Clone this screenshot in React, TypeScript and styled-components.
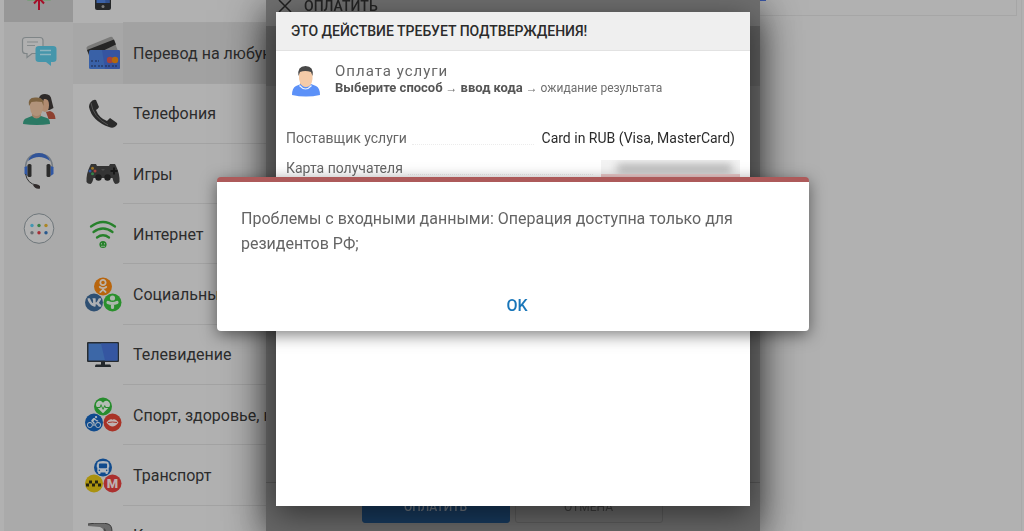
import React from 'react';
import styled, { createGlobalStyle } from 'styled-components';
import { FaVk, FaOdnoklassniki, FaBus, FaHeartbeat } from 'react-icons/fa';
import { MdDirectionsBike } from 'react-icons/md';

const GlobalStyle = createGlobalStyle`
  *, *::before, *::after { box-sizing: border-box; }
  body {
    margin: 0;
    overflow: hidden;
    background: #b1b1b1;
    color: #2c2c2c;
    font-family: Roboto, "Liberation Sans", sans-serif;
    font-size: 14px;
  }
  button { font-family: inherit; cursor: pointer; }
  svg { display: block; flex: none; }
`;

const Page = styled.div`
  display: flex;
  height: 100vh;
  overflow: hidden;
  padding: 0 2px 0 4px;
`;

const Sidebar = styled.nav`
  flex: none;
  width: 69px;
  background: #aaaaaa;
`;

const SideList = styled.ul`
  display: grid;
  grid-template-rows: repeat(5, 1fr);
  height: 298px;
  list-style: none;
  margin: -38px 0 0;
  padding: 0;
`;

const SideLink = styled.a<{ $active?: boolean }>`
  display: flex;
  align-items: center;
  justify-content: center;
  height: 100%;
  background: ${p => (p.$active ? '#979797' : 'transparent')};
`;

const Catalog = styled.nav`
  flex: none;
  width: 260px;
`;

const CatalogList = styled.ul`
  display: grid;
  grid-template-rows: repeat(10, 1fr);
  height: 603px;
  list-style: none;
  margin: -37px 0 0;
  padding: 0;
`;

const CatalogLink = styled.a<{ $active?: boolean }>`
  display: flex;
  align-items: stretch;
  height: 100%;
  color: #2c2c2c;
  text-decoration: none;
  background: ${p => (p.$active ? '#a7a7a7' : 'transparent')};
`;

const CatalogIcon = styled.span`
  display: flex;
  align-items: center;
  justify-content: center;
  flex: none;
  width: 50px;
  padding-left: 10px;
`;

const CatalogLabel = styled.span<{ $active?: boolean }>`
  display: flex;
  align-items: center;
  flex: 1;
  overflow: hidden;
  padding: 1px 0 0 10px;
  border-bottom: 1px solid #a3a3a3;
  background: ${p => (p.$active ? '#a2a2a2' : 'transparent')};
  font-size: 16px;
  white-space: nowrap;
`;

const Content = styled.main`
  flex: 1;
  padding-right: 4px;
  border-right: 1px solid #a9a9a9;
`;

const ContentCard = styled.section`
  display: flex;
  justify-content: center;
  height: 16px;
  border: solid #a6a6a6;
  border-width: 0 1px 1px 0;
`;

const CardMark = styled.span`
  width: 8px;
  height: 1px;
  margin-left: 174px;
  background: #3c59ac;
`;

const Layer = styled.div`
  position: fixed;
  inset: 0;
  display: flex;
  justify-content: center;
  padding-left: 2px;
`;

const PaymentWindow = styled.section`
  display: flex;
  flex-direction: column;
  width: 494px;
  background: #646464;
  box-shadow: 0 10px 40px rgba(0, 0, 0, 0.65);
`;

const PaymentHeader = styled.header`
  display: flex;
  align-items: center;
  gap: 12px;
  height: 26px;
  padding: 0 12px 14px;
  background: #6e6e6e;
`;

const CloseButton = styled.button`
  flex: none;
  padding: 0;
  border: 0;
  background: none;
`;

const PaymentTitle = styled.h1`
  margin: 0;
  color: #242424;
  font-size: 14px;
  font-weight: 500;
`;

const PaymentBanner = styled.div`
  height: 60px;
  background: #5b5b5b;
`;

const PaymentFooter = styled.footer`
  display: flex;
  justify-content: center;
  gap: 5px;
  margin-top: auto;
  padding: 6px 2px 8px 0;
  border-top: 1px solid #555555;
  background: #666666;
`;

const FooterButton = styled.button<{ $primary?: boolean }>`
  width: 148px;
  height: 34px;
  padding: 2px 0 0;
  border: 1px solid ${p => (p.$primary ? '#17395c' : '#5a5a5a')};
  border-radius: 3px;
  background: ${p => (p.$primary ? '#17395c' : 'transparent')};
  color: ${p => (p.$primary ? '#6d7680' : '#3c3c3c')};
  font-size: 12px;
  font-weight: ${p => (p.$primary ? 500 : 400)};
`;

const ConfirmLayer = styled(Layer)`
  padding-top: 12px;
  padding-bottom: 25px;
`;

const ConfirmDialog = styled.section`
  width: 474px;
  background: #ffffff;
  box-shadow: 0 8px 30px rgba(0, 0, 0, 0.5);
`;

const ConfirmTitle = styled.h2`
  margin: 0;
  padding: 0 15px;
  border-bottom: 1px solid #e2e2e2;
  background: #efefef;
  color: #2b2b2b;
  font-size: 14px;
  font-weight: 500;
  line-height: 38px;
`;

const StepHeader = styled.div`
  display: flex;
  align-items: center;
  gap: 14px;
  padding: 10px 15px;
`;

const StepIcon = styled.span`
  padding-top: 4px;
`;

const StepTitle = styled.h3`
  margin: 0;
  color: #666666;
  font-size: 15px;
  font-weight: 400;
  letter-spacing: 1px;
  line-height: 18px;
`;

const StepTrail = styled.p`
  margin: 0;
  color: #6e6e6e;
  font-size: 12px;
  line-height: 16px;
  b { color: #555555; font-size: 13px; font-weight: 700; }
`;

const Details = styled.dl`
  margin: 0;
  padding: 16px 10px 0;
`;

const DetailRow = styled.div`
  display: flex;
  align-items: center;
  height: 30px;
`;

const DetailTerm = styled.dt`
  flex: none;
  color: #666666;
`;

const Leader = styled.span`
  flex: 1;
  height: 14px;
  margin: 0 8px 0 5px;
  border-bottom: 1px dotted #ececec;
`;

const DetailValue = styled.dd`
  margin: 0;
  padding-right: 5px;
  color: #2b2b2b;
`;

const MaskedValue = styled.dd`
  flex: none;
  width: 139px;
  height: 17px;
  margin: 0;
  overflow: hidden;
  padding: 4px 8px 0 16px;
  border-bottom: 3px solid #eccaca;
  background: #f3f3f3;
`;

const MaskedDigits = styled.span`
  display: block;
  height: 9px;
  background: #b4b4b4;
  filter: blur(4px);
`;

const AlertLayer = styled(Layer)`
  align-items: center;
  padding-bottom: 23px;
`;

const AlertDialog = styled.section`
  display: flex;
  flex-direction: column;
  width: 592px;
  max-width: 90%;
  padding: 24px 24px 8px;
  border-top: 5px solid #ad5a5a;
  border-radius: 4px;
  background: #ffffff;
  box-shadow: 0 4px 16px rgba(0, 0, 0, 0.5);
`;

const AlertText = styled.p`
  margin: 0 0 32px;
  color: #646464;
  font-size: 16px;
  line-height: 25px;
`;

const OkButton = styled.button`
  align-self: center;
  height: 35px;
  padding: 0 12px 0 20px;
  border: 0;
  background: none;
  color: #1976b9;
  font-size: 16px;
  font-weight: 500;
`;

const TransferIcon = () => (
  <svg width="34" height="36" viewBox="0 0 34 36">
    <rect x="5" y="4" width="24" height="23" rx="1" fill="#7c9c7c" />
    <path d="M17 36V24M12 29.500l5-5.500 5 5.500" fill="none" stroke="#a50f28" strokeWidth="2" />
  </svg>
);

const ChatIcon = () => (
  <svg width="36" height="30" viewBox="0 0 36 30">
    <path d="M5 1.500h14q3 0 3 3v10q0 3-3 3h-8l-5 4v-4H4.500q-3 0-3-3v-10q0-3 3.500-3z" fill="#b0b0b0" stroke="#7f8587" strokeWidth="1.200" />
    <path d="M6 6h11M6 9.500h8" stroke="#858a8b" strokeWidth="1" />
    <path d="M18 10h14q3.500 0 3.500 3v10q0 3-3.500 3h-2v4l-5-4h-7q-3.500 0-3.500-3V13q0-3 3.500-3z" fill="#4596ab" />
    <path d="M19 14.500h11M19 18.500h11" stroke="#8cb5c0" strokeWidth="1.300" />
  </svg>
);

const PeopleIcon = () => (
  <svg width="34" height="34" viewBox="0 0 34 34">
    <path d="M17 4q1-4 6-4 6 0 6.500 6l2 8-4 2h-8z" fill="#2e2a29" />
    <path d="M22 5q5-1 5 6t-4 7l-5-2z" fill="#b08b70" />
    <path d="M24 18l4-1q5 1 5.500 8h-7z" fill="#8d4030" />
    <path d="M10 18h9v6l-4 4-5-4z" fill="#a1836a" />
    <path d="M8 8q0-4 6-4t7 4v6q-1 8-6.500 8T8 14z" fill="#b1937a" />
    <path d="M7 12Q5 3 14 3.500 23 3 21.500 12L20 8Q14 7 9.500 8z" fill="#7c6240" />
    <path d="M1 30q0-5 4-6l5-2q4.500 5 9 0l6 2q3 1 3 6-13 2-27 0z" fill="#2b7964" />
  </svg>
);

const HeadsetIcon = () => (
  <svg width="32" height="38" viewBox="0 0 32 38">
    <path d="M2.500 16Q3 2 16 2t13.500 14" fill="none" stroke="#747b83" strokeWidth="1.500" />
    <path d="M5 9q3-8 11-8t11 8q-11-8-22 0z" fill="#315499" />
    <path d="M1.500 15l3-1v10l-3-2zM30.500 15l-3-1v10l3-2z" fill="#3158a5" />
    <rect x="4.500" y="12" width="4" height="13" rx="1.500" fill="#2b2b2b" />
    <rect x="23.500" y="12" width="4" height="13" rx="1.500" fill="#2b2b2b" />
    <path d="M2.500 22q2 10 11 11" fill="none" stroke="#343434" strokeWidth="1" />
    <path d="M10 33q4-2 7 1v2.500q-5 1-7-3.500z" fill="#322c2c" />
  </svg>
);

const AppsIcon = () => (
  <svg width="32" height="34" viewBox="0 0 32 34">
    <circle cx="16" cy="15.500" r="14.800" fill="#b1b1b1" stroke="#6f777b" />
    <circle cx="9" cy="12.500" r="1.700" fill="#4397b2" />
    <circle cx="16" cy="12.500" r="1.700" fill="#3b8245" />
    <circle cx="23" cy="12.500" r="1.700" fill="#ac8625" />
    <circle cx="9" cy="19.700" r="1.700" fill="#666d72" />
    <circle cx="16" cy="19.700" r="1.700" fill="#a72e36" />
    <circle cx="23" cy="19.700" r="1.700" fill="#29598d" />
  </svg>
);

const MobileIcon = () => (
  <svg width="18" height="36" viewBox="0 0 18 36">
    <rect x="1" y="0" width="16" height="35" rx="2" fill="#252729" />
    <rect x="2.500" y="3" width="13" height="25" fill="#3b61a6" />
    <path d="M9 3h6.500v25h-4z" fill="#31508d" />
    <circle cx="9" cy="31.500" r="1.500" fill="#7c7c7c" />
  </svg>
);

const CardsIcon = () => (
  <svg width="36" height="34" viewBox="0 0 36 34">
    <path d="M1.500 12.500Q1 11 3 10L25 1q2-1 3 1l5 13-23 13-5-5z" fill="#7a7a79" />
    <path d="M2 14L29 3.500l2 5L5 21z" fill="#252525" />
    <rect x="4" y="14" width="31" height="19" rx="1.500" fill="#3961a7" />
    <path d="M17 14h16.500q1.500 0 1.500 1.500v16q0 1.500-1.500 1.500H20z" fill="#3554a1" />
    <circle cx="25" cy="24" r="3.200" fill="#a6423c" />
    <circle cx="30" cy="24" r="3.200" fill="#b3680d" />
    <path d="M6 25h3m1 0h4M6 30h6m1 0h6m1 0h6m1 0h5" stroke="#202b48" strokeWidth="1.200" strokeDasharray="2 1" />
  </svg>
);

const HandsetIcon = () => (
  <svg width="30" height="30" viewBox="0 0 30 30">
    <path d="M2 4Q5 0 8 1l3 7q-1 2-3 3 3 8 11 11 2-2 3-3l7 5q1 1-1 3-3 3-7 1Q4 22 1 8q0-2 1-4z" fill="#2a2a2a" />
    <path d="M3 4q2 14 17 22" fill="none" stroke="#555555" strokeWidth="1" />
  </svg>
);

const GamepadIcon = () => (
  <svg width="34" height="22" viewBox="0 0 34 22">
    <path d="M5 1h5l1 2h12l1-2h5l1 2q4 8 3.500 16-1 2-4 2-2-1-3-6H7.500q-1 5-3 6-3 0-4-2Q0 11 4 3z" fill="#343434" />
    <circle cx="12.500" cy="14.500" r="3.200" fill="#1e1e1e" />
    <circle cx="21.500" cy="14.500" r="3.200" fill="#1e1e1e" />
    <path d="M28 4.500v7M24.500 8h7" stroke="#171717" strokeWidth="2" />
    <circle cx="6.500" cy="5.200" r="1.500" fill="#9a7326" />
    <circle cx="4" cy="8" r="1.500" fill="#31579f" />
    <circle cx="9" cy="8" r="1.500" fill="#a8403c" />
    <circle cx="6.500" cy="10.800" r="1.500" fill="#348349" />
    <path d="M15 6h4l-2 2z" fill="#4b4b4b" />
  </svg>
);

const WifiIcon = () => (
  <svg width="28" height="30" viewBox="0 0 28 30">
    <path d="M2 7.500q12-9 24 0M4.500 13q9.500-7 19 0M8 18.500q6-4.500 12 0" fill="none" stroke="#27812b" strokeWidth="2.200" strokeLinecap="round" />
    <circle cx="14" cy="25.500" r="3.600" fill="#27812b" />
    <path d="M12.500 24v1.500M15.500 24v1.500M12 27.300h4" stroke="#86ac88" strokeWidth="1" />
  </svg>
);

const SocialIcon = () => (
  <svg width="38" height="36" viewBox="0 0 38 36">
    <circle cx="19" cy="9.500" r="9" fill="#b8650d" />
    <FaOdnoklassniki x="12" y="2" size={14} color="#bcb3a9" />
    <circle cx="10" cy="25.500" r="9" fill="#2e4f72" />
    <FaVk x="3" y="18" size={15} color="#adb0b4" />
    <circle cx="28.500" cy="25.500" r="9" fill="#2a902d" />
    <circle cx="28.500" cy="21" r="2.600" fill="#acb7ac" />
    <path d="M24 25.500q4.500 2 9 0M28.500 26.500v4" stroke="#acb7ac" strokeWidth="3.200" strokeLinecap="round" fill="none" />
  </svg>
);

const TvIcon = () => (
  <svg width="32" height="26" viewBox="0 0 32 26">
    <rect x="0" y="0" width="32" height="20" rx="1" fill="#272c31" />
    <rect x="1.500" y="1.500" width="29" height="17" fill="#3c67a7" />
    <path d="M14 1.500h16.500v17H18z" fill="#3556a1" />
    <path d="M14 20h4v2.500h5q1 0 1 2.500H8q0-2.500 1-2.500h5z" fill="#23282c" />
  </svg>
);

const HealthIcon = () => (
  <svg width="38" height="36" viewBox="0 0 38 36">
    <circle cx="19" cy="9.500" r="9" fill="#278c2d" />
    <FaHeartbeat x="12" y="3" size={14} color="#b4bdb4" />
    <circle cx="10" cy="25.500" r="9" fill="#104b8d" />
    <MdDirectionsBike x="3" y="18" size={14} color="#b0b7be" />
    <circle cx="28.500" cy="25.500" r="9" fill="#a93327" />
    <path d="M22.500 25.500q3-4 5-3.200l1 .5 1-.5q2-.8 5 3.200-6 8-12 0z" fill="#beb3b2" />
    <path d="M24 25.500q4.500-1 9 0" fill="none" stroke="#a93327" />
  </svg>
);

const TransportIcon = () => (
  <svg width="38" height="36" viewBox="0 0 38 36">
    <circle cx="19" cy="9.500" r="9" fill="#104b8d" />
    <FaBus x="12.500" y="3" size={13} color="#b0b7be" />
    <circle cx="10" cy="25.500" r="9" fill="#aa920f" />
    <path d="M5 22.500h3v3H5zM11 22.500h3v3h-3zM2 25.500h3v3H2zM8 25.500h3v3H8zM14 25.500h3v3h-3z" fill="#242211" />
    <circle cx="28.500" cy="25.500" r="9" fill="#ab302f" />
    <text x="28.500" y="30" textAnchor="middle" fontFamily="Roboto, sans-serif" fontSize="13" fontWeight="900" fill="#bdb0af">M</text>
  </svg>
);

const UtilityIcon = () => (
  <svg width="32" height="26" viewBox="0 0 32 26">
    <path d="M1 1q14-2 20 0 4 1 4 8v17h-8V10q0-5-4-6L1 3z" fill="#6b6b6b" />
    <path d="M1 1q14-2 20 0 4 1 4 8" fill="none" stroke="#393939" />
    <path d="M17 5q3 2 3 9v12h-3z" fill="#4a4a4a" />
  </svg>
);

const AvatarIcon = () => (
  <svg width="30" height="32" viewBox="0 0 30 32">
    <path d="M9 17h11v5l-5 5-6-5z" fill="#e4ae86" />
    <path d="M1 30q0-7 4-9l5-2q5 6 10 0l5 2q4 2 4 9-14 3-28 0z" fill="#5c91f8" />
    <path d="M9 20q5.500 7 11 0l1 1q-6.500 7-13 0z" fill="#f3f6fc" />
    <path d="M8 9q0-5 7-5t6.500 5v5q-1 8-6.500 8T8 14z" fill="#f5cba8" />
    <path d="M7.500 11Q6 1 14.500 1 23 1 21.500 11L20 7Q14 5 9 7z" fill="#484848" />
  </svg>
);

const CloseIcon = () => (
  <svg width="14" height="14" viewBox="0 0 14 14">
    <path d="M1 1l12 12M13 1L1 13" stroke="#202020" strokeWidth="1.500" />
  </svg>
);

const sections = [
  { name: 'Переводы', Icon: TransferIcon, active: true },
  { name: 'Сообщения', Icon: ChatIcon },
  { name: 'Контакты', Icon: PeopleIcon },
  { name: 'Поддержка', Icon: HeadsetIcon },
  { name: 'Приложения', Icon: AppsIcon },
];

const categories = [
  { label: 'Связь', Icon: MobileIcon },
  { label: 'Перевод на любую карту', Icon: CardsIcon, active: true },
  { label: 'Телефония', Icon: HandsetIcon },
  { label: 'Игры', Icon: GamepadIcon },
  { label: 'Интернет', Icon: WifiIcon },
  { label: 'Социальные сети', Icon: SocialIcon },
  { label: 'Телевидение', Icon: TvIcon },
  { label: 'Спорт, здоровье, красота', Icon: HealthIcon },
  { label: 'Транспорт', Icon: TransportIcon },
  { label: 'Коммунальные услуги', Icon: UtilityIcon },
];

export default function App() {
  return (
    <>
      <GlobalStyle />
      <Page>
        <Sidebar>
          <SideList>
            {sections.map(({ name, Icon, active }) => (
              <li key={name}>
                <SideLink href="#" aria-label={name} $active={active}><Icon /></SideLink>
              </li>
            ))}
          </SideList>
        </Sidebar>
        <Catalog>
          <CatalogList>
            {categories.map(({ label, Icon, active }) => (
              <li key={label}>
                <CatalogLink href="#" $active={active}>
                  <CatalogIcon><Icon /></CatalogIcon>
                  <CatalogLabel $active={active}>{label}</CatalogLabel>
                </CatalogLink>
              </li>
            ))}
          </CatalogList>
        </Catalog>
        <Content>
          <ContentCard><CardMark /></ContentCard>
        </Content>
      </Page>

      <Layer>
        <PaymentWindow>
          <PaymentHeader>
            <CloseButton aria-label="Закрыть"><CloseIcon /></CloseButton>
            <PaymentTitle>ОПЛАТИТЬ</PaymentTitle>
          </PaymentHeader>
          <PaymentBanner />
          <PaymentFooter>
            <FooterButton $primary>ОПЛАТИТЬ</FooterButton>
            <FooterButton>ОТМЕНА</FooterButton>
          </PaymentFooter>
        </PaymentWindow>
      </Layer>

      <ConfirmLayer>
        <ConfirmDialog role="dialog" aria-labelledby="confirm-title">
          <ConfirmTitle id="confirm-title">ЭТО ДЕЙСТВИЕ ТРЕБУЕТ ПОДТВЕРЖДЕНИЯ!</ConfirmTitle>
          <StepHeader>
            <StepIcon><AvatarIcon /></StepIcon>
            <div>
              <StepTitle>Оплата услуги</StepTitle>
              <StepTrail><b>Выберите способ</b> → <b>ввод кода</b> → ожидание результата</StepTrail>
            </div>
          </StepHeader>
          <Details>
            <DetailRow>
              <DetailTerm>Поставщик услуги</DetailTerm>
              <Leader />
              <DetailValue>Card in RUB (Visa, MasterCard)</DetailValue>
            </DetailRow>
            <DetailRow>
              <DetailTerm>Карта получателя</DetailTerm>
              <Leader />
              <MaskedValue><MaskedDigits /></MaskedValue>
            </DetailRow>
          </Details>
        </ConfirmDialog>
      </ConfirmLayer>

      <AlertLayer>
        <AlertDialog role="alertdialog" aria-describedby="alert-text">
          <AlertText id="alert-text">
            Проблемы с входными данными: Операция доступна только для резидентов РФ;
          </AlertText>
          <OkButton>OK</OkButton>
        </AlertDialog>
      </AlertLayer>
    </>
  );
}
